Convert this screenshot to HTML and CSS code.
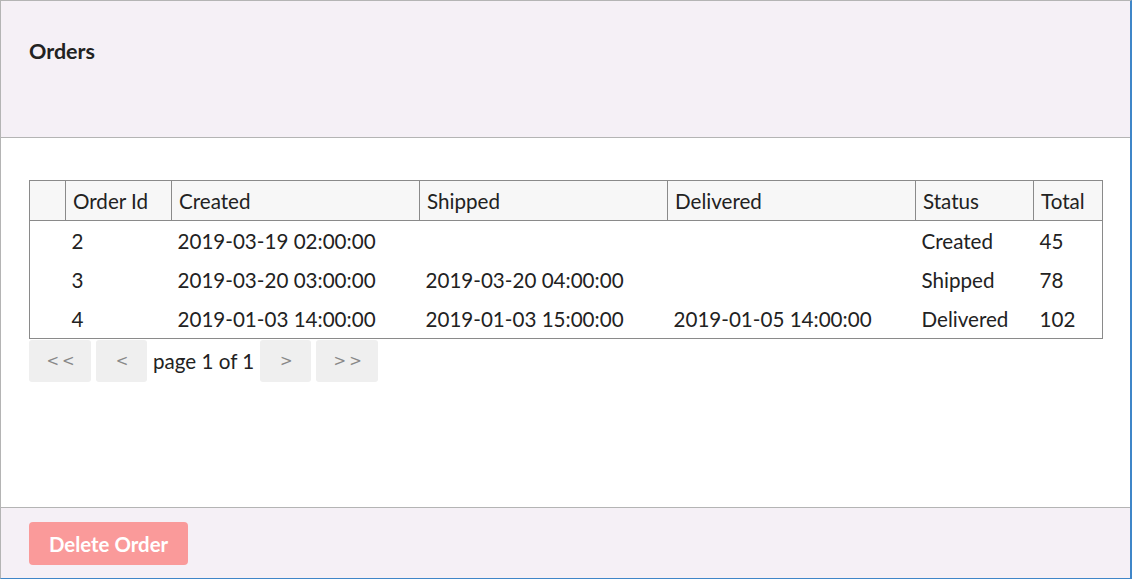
FILE: index.html
```html
<!DOCTYPE html>
<html>
<head>
<meta charset="utf-8">
<link rel="stylesheet" href="styles.css">
</head>
<body>
<div class="modal">
  <div class="modal-header">
    <h2 class="title">Orders</h2>
  </div>
  <div class="modal-body">
    <table class="grid">
      <thead>
        <tr>
          <th class="c-sel"></th>
          <th class="c-id">Order Id</th>
          <th class="c-date">Created</th>
          <th class="c-date">Shipped</th>
          <th class="c-date">Delivered</th>
          <th class="c-status">Status</th>
          <th class="c-total">Total</th>
        </tr>
      </thead>
      <tbody>
        <tr><td></td><td>2</td><td>2019-03-19 02:00:00</td><td></td><td></td><td>Created</td><td>45</td></tr>
        <tr><td></td><td>3</td><td>2019-03-20 03:00:00</td><td>2019-03-20 04:00:00</td><td></td><td>Shipped</td><td>78</td></tr>
        <tr><td></td><td>4</td><td>2019-01-03 14:00:00</td><td>2019-01-03 15:00:00</td><td>2019-01-05 14:00:00</td><td>Delivered</td><td>102</td></tr>
      </tbody>
    </table>
    <div class="pager">
      <button class="pg pg-wide">&lt;&lt;</button>
      <button class="pg">&lt;</button>
      <span class="pg-info">page 1 of 1</span>
      <button class="pg">&gt;</button>
      <button class="pg pg-wide">&gt;&gt;</button>
    </div>
  </div>
  <div class="modal-footer">
    <button class="btn-delete">Delete Order</button>
  </div>
</div>
</body>
</html>
```
FILE: styles.css
```css
html, body {
  margin: 0;
  padding: 0;
  background: #ffffff;
}
body {
  font-family: Lato, "Liberation Sans", sans-serif;
  color: #222;
}
.modal {
  box-sizing: border-box;
  width: 1132px;
  height: 579px;
  border-top: 1px solid #b4b4b4;
  border-left: 1px solid #b4b4b4;
  border-right: 2px solid #3f86c8;
  border-bottom: 1px solid #3f86c8;
  display: flex;
  flex-direction: column;
}
.modal-header {
  height: 137px;
  box-sizing: border-box;
  background: #f5f0f6;
  border-bottom: 1px solid #b4b4b4;
  padding: 37px 28px 0;
}
.title {
  margin: 0;
  font-size: 21.5px;
  line-height: 26px;
  font-weight: 700;
  color: #222;
}
.modal-body {
  height: 369px;
  box-sizing: border-box;
  padding: 42px 27px 0 28px;
  background: #fff;
}
.grid {
  width: 1074px;
  border-collapse: collapse;
  border: 1px solid #8a8a8a;
  font-size: 20.6px;
  color: #222;
}
.grid th {
  height: 39px;
  padding: 0 7px;
  text-align: left;
  font-weight: 400;
  background: #f7f7f7;
  border-left: 1px solid #8a8a8a;
  border-bottom: 1px solid #8a8a8a;
  color: #222;
}
.grid th:first-child { border-left: none; }
.grid td {
  height: 39px;
  padding: 0 6px;
  text-align: left;
}
.c-sel { width: 21px; }
.c-id { width: 91px; }
.c-date { width: 233px; }
.c-status { width: 103px; }
.pager {
  display: flex;
  align-items: center;
  gap: 5px;
  margin-top: 1px;
}
.pg {
  width: 51px;
  height: 42px;
  border: none;
  border-radius: 3px;
  background: #efefef;
  color: #888;
  font-family: "DejaVu Sans", sans-serif;
  font-size: 15px;
  letter-spacing: 3px;
  padding: 0 0 0 4px;
}
.pg-wide { width: 62px; }
.pg-info {
  font-size: 20.6px;
  color: #222;
  padding: 0 1px;
}
.modal-footer {
  flex: 1;
  background: #f5f0f6;
  border-top: 1px solid #b4b4b4;
  padding: 14px 28px 0;
}
.btn-delete {
  height: 43px;
  padding: 0 20px;
  border: none;
  border-radius: 4px;
  background: #fa9a9a;
  color: #fff;
  font-family: Lato, "Liberation Sans", sans-serif;
  font-weight: 700;
  font-size: 20.4px;
}
```
